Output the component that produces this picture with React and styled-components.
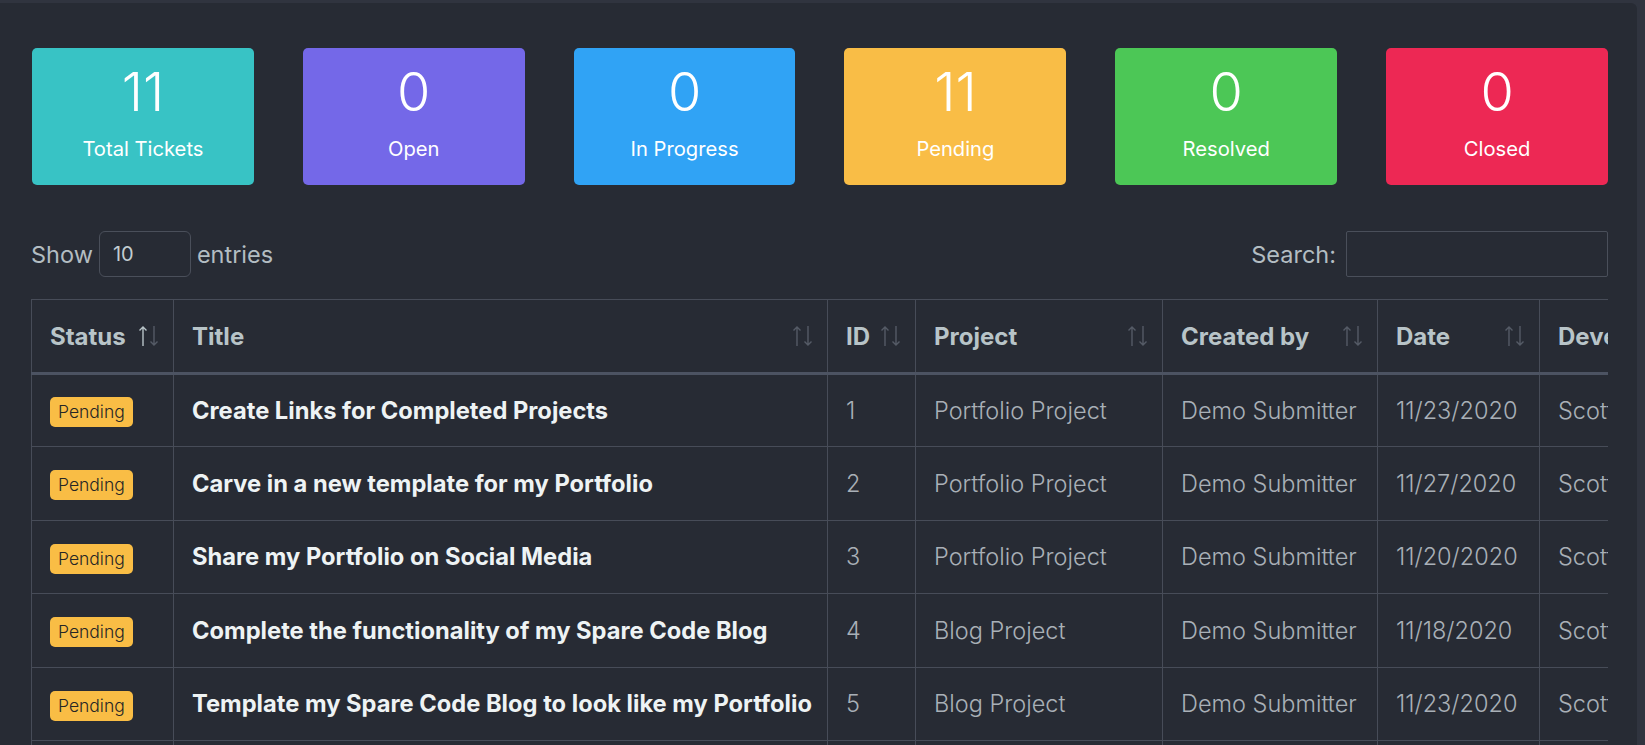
import React from "react";
import styled, { createGlobalStyle } from "styled-components";

const GlobalStyle = createGlobalStyle`
  html, body {
    margin: 0;
    padding: 0;
    background: #30343f;
    overflow: hidden;
    font-family: Inter, "Noto Sans", Roboto, sans-serif;
  }
  * { box-sizing: border-box; }
`;

const Panel = styled.main`
  margin: 3px 8px 0 0;
  min-height: 742px;
  background: #272b34;
  border-radius: 0 6px 0 0;
  padding: 45px 29px 0 31px;
`;

const StatGrid = styled.section`
  display: grid;
  grid-template-columns: repeat(6, 1fr);
  gap: 49px;
  padding-left: 1px;
`;

const StatCard = styled.div`
  height: 137px;
  border-radius: 5px;
  background: ${(p) => p.$bg};
  color: #ffffff;
  display: flex;
  flex-direction: column;
  align-items: center;
`;

const StatValue = styled.div`
  font-size: 54px;
  font-weight: 300;
  line-height: 54px;
  margin-top: 17px;
`;

const StatLabel = styled.div`
  font-size: 20.2px;
  font-weight: 400;
  line-height: 24px;
  margin-top: 18px;
`;

const Controls = styled.div`
  margin-top: 46px;
  display: flex;
  justify-content: space-between;
  align-items: center;
  height: 46px;
`;

const ControlGroup = styled.label`
  display: flex;
  align-items: center;
  gap: 6px;
  font-size: 23.5px;
  color: #b3bdc2;
`;

const LengthSelect = styled.div`
  width: 92px;
  height: 46px;
  border: 1px solid #4a4f5a;
  border-radius: 6px;
  padding-left: 13px;
  display: flex;
  align-items: center;
  font-size: 20px;
  color: #c2ccd0;
`;

const SearchInput = styled.input`
  width: 262px;
  height: 46px;
  border: 1px solid #4a4f5a;
  border-radius: 2px;
  background: transparent;
  margin-left: 4px;
  outline: none;
  color: #c2ccd0;
  font-size: 20px;
`;

const TableWrap = styled.div`
  margin-top: 22px;
  overflow: hidden;
  width: 100%;
`;

const Table = styled.table`
  border-collapse: collapse;
  table-layout: fixed;
  width: 2200px;
`;

const Th = styled.th`
  position: relative;
  height: 74px;
  padding: 0 40px 0 18px;
  text-align: left;
  font-size: 24px;
  font-weight: 700;
  color: #b8c4c8;
  border: 1px solid #474c58;
  border-bottom: 3px solid #4c5362;
  white-space: nowrap;
  overflow: hidden;
`;

const SortIcon = styled.svg`
  position: absolute;
  right: 13px;
  top: 50%;
  transform: translateY(-50%);
`;

const Td = styled.td`
  height: 73.4px;
  padding: 0 18px;
  border: 1px solid #474c58;
  font-size: ${(p) => (p.$strong ? "23.7px" : "23.5px")};
  font-weight: ${(p) => (p.$strong ? 700 : 300)};
  color: ${(p) => (p.$strong ? "#eef3f4" : "#a9b0b7")};
  white-space: nowrap;
  overflow: hidden;
  vertical-align: middle;
`;

const Badge = styled.span`
  display: inline-block;
  background: #f9bd45;
  color: #262626;
  font-size: 17.5px;
  line-height: 30px;
  height: 30px;
  padding: 0 8px;
  border-radius: 5px;
  vertical-align: middle;
  position: relative;
  top: 1px;
`;

function Sort({ active }) {
  const dim = "#555b66";
  return (
    <SortIcon width="22" height="22" viewBox="0 0 22 22" fill="none" strokeWidth="1.4">
      <g stroke={active ? "#b8c4c8" : dim}>
        <path d="M5 21V2M1.5 5.5L5 2l3.5 3.5" />
      </g>
      <g stroke={dim}>
        <path d="M16 1v19M12.5 16.5L16 20l3.5-3.5" />
      </g>
    </SortIcon>
  );
}

const stats = [
  { v: 11, l: "Total Tickets", c: "#38c3c5" },
  { v: 0, l: "Open", c: "#7468e8" },
  { v: 0, l: "In Progress", c: "#30a3f5" },
  { v: 11, l: "Pending", c: "#f9bd46" },
  { v: 0, l: "Resolved", c: "#4cc756" },
  { v: 0, l: "Closed", c: "#ed2854" },
];

const cols = [
  { k: "Status", w: 142, active: true },
  { k: "Title", w: 654 },
  { k: "ID", w: 88 },
  { k: "Project", w: 247 },
  { k: "Created by", w: 215 },
  { k: "Date", w: 162 },
  { k: "Developer", w: 230 },
  { k: "Priority", w: 160 },
  { k: "Type", w: 302 },
];

const rows = [
  ["Create Links for Completed Projects", 1, "Portfolio Project", "11/23/2020"],
  ["Carve in a new template for my Portfolio", 2, "Portfolio Project", "11/27/2020"],
  ["Share my Portfolio on Social Media", 3, "Portfolio Project", "11/20/2020"],
  ["Complete the functionality of my Spare Code Blog", 4, "Blog Project", "11/18/2020"],
  ["Template my Spare Code Blog to look like my Portfolio", 5, "Blog Project", "11/23/2020"],
  ["Add a contact form to my Portfolio", 6, "Portfolio Project", "11/21/2020"],
  ["Fix the comment section of my Blog", 7, "Blog Project", "11/22/2020"],
];

export default function App() {
  return (
    <>
      <GlobalStyle />
      <Panel>
        <StatGrid>
          {stats.map((s) => (
            <StatCard key={s.l} $bg={s.c}>
              <StatValue>{s.v}</StatValue>
              <StatLabel>{s.l}</StatLabel>
            </StatCard>
          ))}
        </StatGrid>
        <Controls>
          <ControlGroup>
            Show <LengthSelect>10</LengthSelect> entries
          </ControlGroup>
          <ControlGroup>
            Search: <SearchInput type="text" />
          </ControlGroup>
        </Controls>
        <TableWrap>
          <Table>
            <colgroup>
              {cols.map((c) => (
                <col key={c.k} style={{ width: c.w }} />
              ))}
            </colgroup>
            <thead>
              <tr>
                {cols.map((c) => (
                  <Th key={c.k}>
                    {c.k}
                    <Sort active={c.active} />
                  </Th>
                ))}
              </tr>
            </thead>
            <tbody>
              {rows.map((r) => (
                <tr key={r[1]}>
                  <Td>
                    <Badge>Pending</Badge>
                  </Td>
                  <Td $strong>{r[0]}</Td>
                  <Td>{r[1]}</Td>
                  <Td>{r[2]}</Td>
                  <Td>Demo Submitter</Td>
                  <Td>{r[3]}</Td>
                  <Td>Scott Developer</Td>
                  <Td>Medium</Td>
                  <Td>Work Task</Td>
                </tr>
              ))}
            </tbody>
          </Table>
        </TableWrap>
      </Panel>
    </>
  );
}
